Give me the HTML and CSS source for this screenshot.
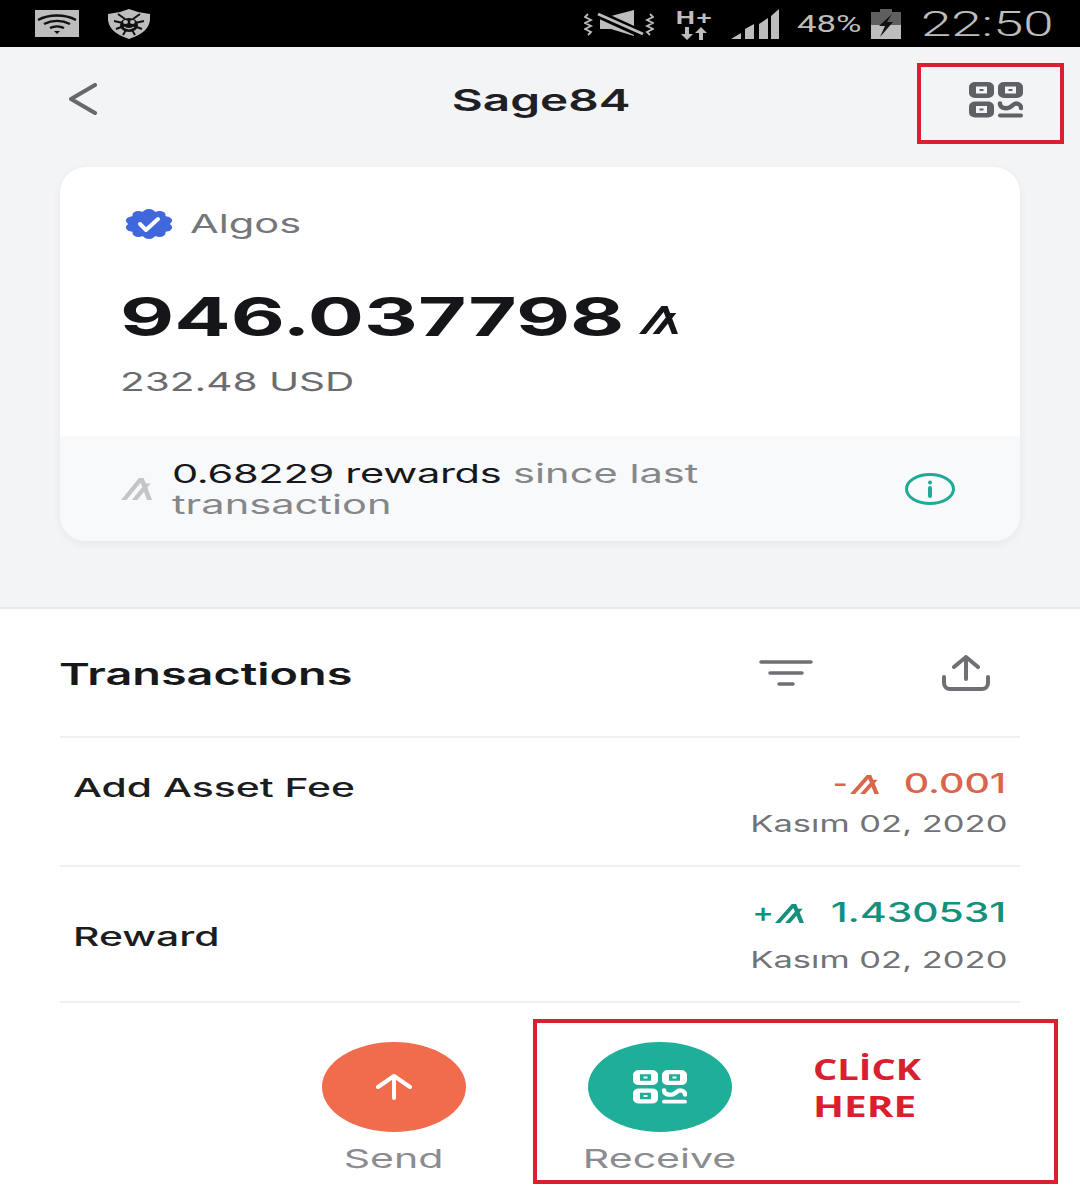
FILE: index.html
```html
<!DOCTYPE html>
<html lang="en">
<head>
<meta charset="utf-8">
<title>Sage84</title>
<link rel="stylesheet" href="styles.css">
</head>
<body>
<svg class="defs" width="0" height="0" aria-hidden="true">
  <symbol id="algo" viewBox="0 0 113 113" preserveAspectRatio="none">
    <path d="M113 113H95.300L83.800 70.200 59.100 113H39.400l38.200-66.200-6.100-23L20 113H0L65.300 0h17.300l7.600 28h17.900L95.900 49.200z"/>
  </symbol>
  <symbol id="qr" viewBox="0 0 54 36" preserveAspectRatio="none">
    <path fill-rule="evenodd" d="M6 0h13a6 5 0 0 1 6 5v6a6 5 0 0 1-6 5H6a6 5 0 0 1-6-5V5a6 5 0 0 1 6-5zM7 4.500v7h11v-7zM10.500 7h4v2h-4z"/>
    <path fill-rule="evenodd" d="M35 0h13a6 5 0 0 1 6 5v6a6 5 0 0 1-6 5H35a6 5 0 0 1-6-5V5a6 5 0 0 1 6-5zM36 4.500v7h11v-7zM39.500 7h4v2h-4z"/>
    <path fill-rule="evenodd" d="M6 19.500h13a6 5 0 0 1 6 5v6a6 5 0 0 1-6 5H6a6 5 0 0 1-6-5v-6a6 5 0 0 1 6-5zM7 24v7h11v-7zM10.500 26.500h4v2h-4z"/>
    <path d="M31 21.500c0 4 4 5 8 4.500s5-4.500 8-4.500 5 2 5 4.500" fill="none" stroke="currentColor" stroke-width="4.500" stroke-linecap="round"/>
    <path d="M31 33.500h21" fill="none" stroke="currentColor" stroke-width="4" stroke-linecap="round"/>
  </symbol>
</svg>

<div class="page">
  <header class="status">
    <div class="status-left">
      <svg class="ic-wifi" viewBox="0 0 44 27" aria-hidden="true">
        <rect width="44" height="27" fill="#bdbdbd"/>
        <path d="M3 10c11-6 27-6 38 0M9 14c8-4 18-4 26 0M15 18c4-2 10-2 14 0" fill="none" stroke="#111" stroke-width="2.500"/>
        <path d="M19 21h6l-3 3z" fill="#111"/>
      </svg>
      <svg class="ic-shield" viewBox="0 0 42 30" aria-hidden="true">
        <path d="M21 0l9 3 12 2c1 10-2 19-21 25C2 24-1 15 0 5l12-2z" fill="#bdbdbd"/>
        <ellipse cx="21" cy="16" rx="9" ry="7" fill="#111"/>
        <ellipse cx="17.500" cy="13" rx="2.500" ry="2" fill="#bdbdbd"/>
        <ellipse cx="24.500" cy="13" rx="2.500" ry="2" fill="#bdbdbd"/>
        <path d="M16 18c3 2 7 2 10 0" fill="none" stroke="#bdbdbd" stroke-width="1.500"/>
        <path d="M10 5l7 5M32 5l-7 5M6 12l9 2M36 12l-9 2M8 20l8-3M34 20l-8-3M15 26l3-5M27 26l-3-5" stroke="#111" stroke-width="2"/>
      </svg>
    </div>
    <div class="status-right">
      <svg class="ic-mute" viewBox="0 0 70 34" aria-hidden="true">
        <path d="M16 9h11l23-6v26L27 22H16z" fill="#bdbdbd"/>
        <path d="M12 6l48 22" stroke="#000" stroke-width="8"/>
        <path d="M14 7l45 20" stroke="#bdbdbd" stroke-width="3"/>
        <path d="M4 7L1 10l6 3-6 3 6 3-6 3 6 3-3 3M66 7l3 3-6 3 6 3-6 3 6 3-6 3 3 3" fill="none" stroke="#bdbdbd" stroke-width="1.800"/>
      </svg>
      <div class="net">
        <span class="net-label">H+</span>
        <svg class="ic-arrows" viewBox="0 0 26 13" aria-hidden="true">
          <path d="M4 0h4v7h4l-6 6-6-6h4zM18 13h4V6h4l-6-6-6 6h4z" fill="#bdbdbd"/>
        </svg>
      </div>
      <svg class="ic-signal" viewBox="0 0 48 31" aria-hidden="true">
        <path d="M0 31l10-6v6zM14 31V21l9-5v15zM28 31V16l9-6v21zM40 31V8l8-7v30z" fill="#bdbdbd"/>
      </svg>
      <span class="pct"><span class="wide wide-left">48%</span></span>
      <svg class="ic-batt" viewBox="0 0 30 30" aria-hidden="true">
        <path d="M9 0h12v3h9v13H0V3h9z" fill="#5f5f5f"/>
        <rect y="16" width="30" height="14" fill="#bdbdbd"/>
        <path d="M21 5L8 17h6L9 28l13-15h-6z" fill="#111"/>
      </svg>
      <span class="clock"><span class="wide wide-left">22:50</span></span>
    </div>
  </header>

  <div class="top">
    <nav class="nav">
      <svg class="ic-back" viewBox="0 0 29 32" aria-hidden="true">
        <path d="M27 2L3 16l24 14" fill="none" stroke="#67686c" stroke-width="4" stroke-linecap="round" stroke-linejoin="round"/>
      </svg>
      <h1 class="title"><span class="wide wide-center">Sage84</span></h1>
      <svg class="ic-qr-head"><use href="#qr"/></svg>
      <div class="mark mark-head"></div>
    </nav>

    <section class="card">
      <div class="card-main">
        <div class="asset">
          <svg class="ic-verified" viewBox="0 0 48 30" aria-hidden="true">
            <g fill="#4068dc">
              <ellipse cx="24" cy="15" rx="21" ry="13"/>
              <ellipse cx="41.100" cy="18.400" rx="6" ry="4"/>
              <ellipse cx="41.100" cy="11.600" rx="6" ry="4"/>
              <ellipse cx="6.900" cy="18.400" rx="6" ry="4"/>
              <ellipse cx="6.900" cy="11.600" rx="6" ry="4"/>
              <ellipse cx="34.600" cy="23.900" rx="6" ry="4"/>
              <ellipse cx="34.600" cy="6.100" rx="6" ry="4"/>
              <ellipse cx="13.400" cy="23.900" rx="6" ry="4"/>
              <ellipse cx="13.400" cy="6.100" rx="6" ry="4"/>
              <ellipse cx="24" cy="26" rx="6" ry="4"/>
              <ellipse cx="24" cy="4" rx="6" ry="4"/>
            </g>
            <path d="M15 15l6 6 12-11" fill="none" stroke="#fff" stroke-width="4" stroke-linecap="round" stroke-linejoin="round"/>
          </svg>
          <span class="asset-name"><span class="wide wide-left">Algos</span></span>
        </div>
        <div class="balance">
          <span class="balance-num"><span class="wide wide-left">946.037798</span></span>
          <svg class="ic-algo-big"><use href="#algo"/></svg>
        </div>
        <div class="usd"><span class="wide wide-left">232.48 USD</span></div>
      </div>
      <div class="rewards">
        <svg class="ic-algo-gray"><use href="#algo"/></svg>
        <div class="rewards-text">
          <div class="rline"><span class="wide wide-left"><span class="rdark">0.68229 rewards</span> since last</span></div>
          <div class="rline"><span class="wide wide-left">transaction</span></div>
        </div>
        <svg class="ic-info" viewBox="0 0 50 32" aria-hidden="true">
          <ellipse cx="25" cy="16" rx="23.500" ry="14.500" fill="none" stroke="#1eaa96" stroke-width="3"/>
          <path d="M25 15v8" stroke="#1eaa96" stroke-width="4" stroke-linecap="round"/>
          <circle cx="25" cy="9.500" r="2" fill="#1eaa96"/>
        </svg>
      </div>
    </section>
  </div>

  <main class="list">
    <div class="list-head">
      <h2 class="list-title"><span class="wide wide-left">Transactions</span></h2>
      <div class="list-tools">
        <svg class="ic-filter" viewBox="0 0 54 28" aria-hidden="true">
          <path d="M2 3h50M11 14h32M20 25h14" stroke="#6f7074" stroke-width="3.500" stroke-linecap="round"/>
        </svg>
        <svg class="ic-share" viewBox="0 0 48 36" aria-hidden="true">
          <path d="M24 24V3M12 12L24 2l12 10" fill="none" stroke="#6f7074" stroke-width="4" stroke-linecap="round" stroke-linejoin="round"/>
          <path d="M2 22v6a6 6 0 0 0 6 6h32a6 6 0 0 0 6-6v-6" fill="none" stroke="#6f7074" stroke-width="4" stroke-linecap="round"/>
        </svg>
      </div>
    </div>

    <div class="tx tx-fee">
      <div class="tx-name"><span class="wide wide-left">Add Asset Fee</span></div>
      <div class="tx-side">
        <div class="amount amount-neg">
          <span class="sign">-</span><svg class="ic-algo-sm"><use href="#algo"/></svg>
          <span class="value"><span class="wide wide-right">0.001</span></span>
        </div>
        <div class="date"><span class="wide wide-right">Kasım 02, 2020</span></div>
      </div>
    </div>

    <div class="tx tx-reward">
      <div class="tx-name"><span class="wide wide-left">Reward</span></div>
      <div class="tx-side">
        <div class="amount amount-pos">
          <span class="sign">+</span><svg class="ic-algo-sm"><use href="#algo"/></svg>
          <span class="value"><span class="wide wide-right">1.430531</span></span>
        </div>
        <div class="date date-gap"><span class="wide wide-right">Kasım 02, 2020</span></div>
      </div>
    </div>

    <div class="actions">
      <div class="action">
        <div class="fab fab-send">
          <svg class="ic-up" viewBox="0 0 38 26" aria-hidden="true">
            <path d="M19 24V3M3 13L19 2l16 11" fill="none" stroke="#fff" stroke-width="4" stroke-linecap="round" stroke-linejoin="round"/>
          </svg>
        </div>
        <div class="action-label"><span class="wide wide-center">Send</span></div>
      </div>
      <div class="action">
        <div class="fab fab-receive">
          <svg class="ic-qr-fab"><use href="#qr"/></svg>
        </div>
        <div class="action-label"><span class="wide wide-center">Receive</span></div>
      </div>
      <div class="mark mark-receive"></div>
      <div class="click"><span class="wide wide-left">CLİCK</span><br><span class="wide wide-left click-here">HERE</span></div>
    </div>
  </main>
</div>
</body>
</html>
```
FILE: styles.css
```css
* { box-sizing: border-box; margin: 0; padding: 0; }
html, body { width: 1080px; height: 1200px; overflow: hidden; background: #fff; }
body { font-family: Inter, "Liberation Sans", sans-serif; color: #18191d; }
.defs { position: absolute; }
svg { display: block; flex: none; }

.wide { display: inline-block; white-space: nowrap; transform: scaleX(1.5); }
.wide-left { transform-origin: left center; }
.wide-right { transform-origin: right center; }
.wide-center { transform-origin: center center; }

/* status bar */
.status { height: 47px; background: #000; display: flex; justify-content: space-between; align-items: center; padding: 0 28px 0 35px; color: #bdbdbd; }
.status-left { display: flex; align-items: center; gap: 29px; }
.ic-wifi { width: 44px; height: 27px; }
.ic-shield { width: 42px; height: 30px; }
.status-right { display: flex; align-items: center; }
.ic-mute { width: 70px; height: 34px; margin-right: 22px; }
.net { width: 36px; margin-right: 19px; display: flex; flex-direction: column; align-items: center; }
.net-label { font: 700 19px/19px "Liberation Sans", sans-serif; letter-spacing: 1px; transform: scaleX(1.4); }
.ic-arrows { width: 26px; height: 13px; }
.ic-signal { width: 48px; height: 31px; margin-right: 18px; }
.pct { width: 74px; font: 400 24px/30px Roboto, sans-serif; }
.pct .wide { transform: scaleX(1.45); }
.ic-batt { width: 30px; height: 30px; margin-right: 20px; }
.clock { width: 131px; padding-top: 3px; font: 300 35px/40px Roboto, sans-serif; }
.clock .wide { transform: scaleX(1.56); }

/* top area */
.top { height: 562px; background: #f3f4f6; border-bottom: 2px solid #e9e9ec; padding: 0 60px; }
.nav { height: 120px; position: relative; display: grid; grid-template-columns: 1fr auto 1fr; margin: 0 -60px; padding: 0 57px 0 68px; }
.ic-back { width: 29px; height: 32px; margin-top: 36px; }
.title { font-size: 30px; line-height: 36px; font-weight: 600; margin: 35px 8px 0 0; color: #1f2024; }
.title .wide { transform: scaleX(1.59); }
.ic-qr-head { width: 54px; height: 36px; margin-top: 35px; justify-self: end; color: #5f6065; fill: #5f6065; }
.mark { position: absolute; border: 4px solid #d8202e; }
.mark-head { left: 917px; top: 16px; width: 147px; height: 81px; }

.card { height: 374px; background: #fff; border-radius: 26px; box-shadow: 0 3px 10px rgba(30, 30, 50, 0.06); overflow: hidden; display: flex; flex-direction: column; }
.card-main { flex: 1; padding: 40px 0 0 60px; }
.asset { display: flex; align-items: center; gap: 17px; margin-left: 5px; height: 34px; }
.ic-verified { width: 48px; height: 30px; }
.asset-name { font-size: 26px; line-height: 30px; color: #75767b; }
.asset-name .wide { transform: scaleX(1.6); }
.balance { display: flex; align-items: center; margin-top: 46px; height: 60px; }
.balance-num { width: 519px; font-size: 53px; line-height: 60px; font-weight: 700; color: #15161a; }
.balance-num .wide { transform: scaleX(1.575); }
.ic-algo-big { width: 39px; height: 28px; margin-top: 6px; fill: #15161a; }
.usd { margin-top: 19px; font-size: 26px; line-height: 32px; color: #6b6c70; }
.usd .wide { transform: scaleX(1.56); }

.rewards { height: 105px; background: #f8f9fb; display: flex; align-items: center; padding: 0 65px 0 61px; }
.ic-algo-gray { width: 31px; height: 22px; margin-right: 20px; fill: #c4c5c8; }
.rewards-text { flex: 1; }
.rline { font-size: 26px; line-height: 31px; color: #86878b; }
.rline .wide { transform: scaleX(1.6); }
.rdark { color: #17181c; font-weight: 400; letter-spacing: -0.2px; }
.ic-info { width: 50px; height: 32px; }

/* transactions */
.list { flex: 1; }
.list-head { height: 129px; margin: 0 60px; border-bottom: 2px solid #f0f0f2; display: flex; justify-content: space-between; align-items: center; }
.list-title { font-size: 30px; line-height: 36px; font-weight: 600; color: #17181c; margin-top: 3px; margin-left: -1px; }
.list-title .wide { transform: scaleX(1.56); }
.list-tools { display: flex; align-items: center; gap: 129px; padding-right: 30px; }
.ic-filter { width: 54px; height: 28px; }
.ic-share { width: 48px; height: 36px; }

.tx { margin: 0 60px; padding: 0 13px 0 13px; border-bottom: 2px solid #f0f0f2; display: flex; justify-content: space-between; }
.tx-fee { height: 129px; }
.tx-reward { height: 136px; align-items: flex-start; }
.tx-name { font-size: 26px; line-height: 32px; font-weight: 500; color: #1c1d21; }
.tx-name .wide { transform: scaleX(1.57); }
.tx-fee .tx-name { margin-top: 34px; }
.tx-reward .tx-name { margin-top: 54px; }
.tx-side { display: flex; flex-direction: column; align-items: flex-end; }
.tx-fee .tx-side { margin-top: 30px; }
.tx-reward .tx-side { margin-top: 30px; }
.amount { display: flex; align-items: center; height: 32px; padding-right: 1px; font-size: 27px; line-height: 32px; font-weight: 500; }
.amount-neg { color: #d9654a; fill: #d9654a; }
.amount-pos { color: #13917c; fill: #13917c; }
.amount .wide { transform: scaleX(1.46); }
.amount-pos .wide { transform: scaleX(1.51); }
.sign { font-size: 27px; margin-right: 1px; transform: scaleX(1.2); }
.ic-algo-sm { width: 29px; height: 19px; margin-left: 2px; }
.amount-neg .value { margin-left: 57px; }
.amount-pos .value { margin-left: 86px; }
.date { font-size: 23px; line-height: 30px; color: #727377; margin-top: 9px; }
.date-gap { margin-top: 16px; }

/* actions */
.actions { position: relative; display: flex; gap: 122px; padding: 39px 0 0 322px; }
.action { width: 144px; display: flex; flex-direction: column; align-items: center; }
.fab { width: 144px; height: 90px; border-radius: 50%; display: flex; align-items: center; justify-content: center; }
.fab-send { background: #f06c4c; }
.fab-receive { background: #1fae98; }
.ic-up { width: 38px; height: 26px; }
.ic-qr-fab { width: 54px; height: 34px; color: #fff; fill: #fff; }
.action-label { margin-top: 11px; font-size: 26px; line-height: 32px; color: #8b8c90; }
.action-label .wide { transform: scaleX(1.58); }
.mark-receive { left: 533px; top: 16px; width: 525px; height: 165px; }
.click { position: absolute; left: 813px; top: 48px; font: 700 28px/37px "Open Sans", sans-serif; color: #d8202e; }
.click .wide { transform: scaleX(1.36); }
.click .click-here { transform: scaleX(1.45); }
```
